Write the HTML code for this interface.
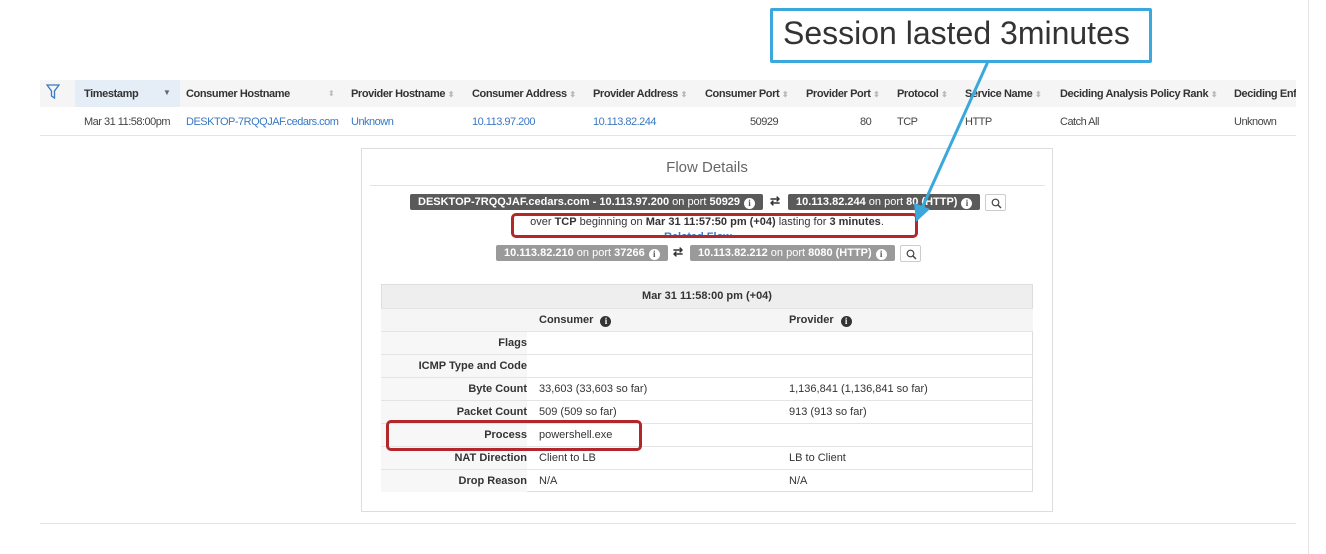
<!DOCTYPE html>
<html><head><meta charset="utf-8"><style>
*{margin:0;padding:0;box-sizing:border-box}
body{width:1326px;height:554px;background:#fff;font-family:"Liberation Sans",Arial,sans-serif;position:relative;overflow:hidden;color:#333}
.a{position:absolute;white-space:nowrap}
.h{font-size:11px;font-weight:bold;color:#333;top:88px;letter-spacing:-0.4px}
.d{font-size:11px;color:#444;top:116px;letter-spacing:-0.5px}
.l{color:#3a78c2}
.s{color:#bbb;font-size:8px}
.b{position:absolute;height:16px;color:#fff;font-size:11px;line-height:16px;padding:0 8px;border-radius:2px;white-space:nowrap}
.b b{font-weight:bold}
.i{display:inline-block;width:11px;height:11px;border-radius:50%;background:#fff;color:#555;font-size:9px;line-height:11px;text-align:center;font-weight:bold;font-family:"Liberation Serif",serif;vertical-align:-1px;margin-left:4px}
.q{position:absolute;width:21px;height:17px;border:1px solid #ccc;border-radius:2px;background:#fff}
.q svg{position:absolute;left:5px;top:3px}
.row{position:absolute;left:381px;width:652px;height:23px;border-top:1px solid #e4e4e4;font-size:11px;line-height:22px}
.row .k{position:absolute;left:0;width:146px;text-align:right;font-weight:bold;background:#f7f7f7;height:22px}
.row .c{position:absolute;left:158px}
.row .p{position:absolute;left:408px}
.red{position:absolute;border:3px solid #b3272a;border-radius:5px}
</style></head><body>
<div class="a" style="left:40px;top:80px;width:1256px;height:27px;background:#f5f5f5"></div>
<div class="a" style="left:75px;top:80px;width:105px;height:27px;background:#e5edf6"></div>
<div class="a" style="left:40px;top:135px;width:1256px;height:1px;background:#e4e4e4"></div>
<div class="a" style="left:1308px;top:0;width:1px;height:554px;background:#e4e4e4"></div>
<div class="a" style="left:40px;top:523px;width:1256px;height:1px;background:#e4e4e4"></div>
<svg class="a" style="left:46px;top:84px" width="14" height="16" viewBox="0 0 14 16"><path d="M1 1H13L8.5 7V14L5.5 12V7Z" fill="none" stroke="#3a78c2" stroke-width="1.3"/></svg>
<div class="a h" style="left:84px">Timestamp</div><div class="a" style="left:163px;top:88px;font-size:8px;color:#666">▼</div>
<div class="a h" style="left:186px">Consumer Hostname</div><div class="a s" style="left:328px;top:89px">⬍</div>
<div class="a h" style="left:351px">Provider Hostname <span class="s">⬍</span></div>
<div class="a h" style="left:472px">Consumer Address <span class="s">⬍</span></div>
<div class="a h" style="left:593px">Provider Address <span class="s">⬍</span></div>
<div class="a h" style="left:705px">Consumer Port <span class="s">⬍</span></div>
<div class="a h" style="left:806px">Provider Port <span class="s">⬍</span></div>
<div class="a h" style="left:897px">Protocol <span class="s">⬍</span></div>
<div class="a h" style="left:965px">Service Name <span class="s">⬍</span></div>
<div class="a h" style="left:1060px">Deciding Analysis Policy Rank <span class="s">⬍</span></div>
<div class="a h" style="left:1234px;width:62px;overflow:hidden">Deciding Enforcement</div>
<div class="a d" style="left:84px">Mar 31 11:58:00pm</div>
<div class="a d l" style="left:186px">DESKTOP-7RQQJAF.cedars.com</div>
<div class="a d l" style="left:351px">Unknown</div>
<div class="a d l" style="left:472px">10.113.97.200</div>
<div class="a d l" style="left:593px">10.113.82.244</div>
<div class="a d" style="left:750px">50929</div>
<div class="a d" style="left:860px">80</div>
<div class="a d" style="left:897px">TCP</div>
<div class="a d" style="left:965px">HTTP</div>
<div class="a d" style="left:1060px">Catch All</div>
<div class="a d" style="left:1234px">Unknown</div>
<div class="a" style="left:361px;top:148px;width:692px;height:364px;border:1px solid #ddd"></div>
<div class="a" style="left:361px;top:159px;width:692px;text-align:center;font-size:15px;color:#666">Flow Details</div>
<div class="a" style="left:370px;top:185px;width:675px;height:1px;background:#e4e4e4"></div>
<div class="b" style="left:410px;top:194px;background:#5a5a5a"><b>DESKTOP-7RQQJAF.cedars.com - 10.113.97.200</b> on port <b>50929</b><span class="i">i</span></div>
<div class="a" style="left:770px;top:194px;font-size:12px;font-weight:bold;color:#333">⇄</div>
<div class="b" style="left:788px;top:194px;background:#5a5a5a"><b>10.113.82.244</b> on port <b>80 (HTTP)</b><span class="i">i</span></div>
<div class="q" style="left:985px;top:194px"><svg width="11" height="11" viewBox="0 0 11 11"><circle cx="4.5" cy="4.5" r="3.3" fill="none" stroke="#444" stroke-width="1.2"/><line x1="7" y1="7" x2="10" y2="10" stroke="#444" stroke-width="1.4"/></svg></div>
<div class="a" style="left:361px;top:216px;width:692px;text-align:center;font-size:11px;color:#333">over <b>TCP</b> beginning on <b>Mar 31 11:57:50 pm (+04)</b> lasting for <b>3 minutes</b>.</div>
<div class="a" style="left:664px;top:231px;font-size:11px;color:#3a78c2;font-weight:bold;height:7px;overflow:hidden">Related Flow</div>
<div class="b" style="left:496px;top:245px;background:#9a9a9a"><b>10.113.82.210</b> on port <b>37266</b><span class="i">i</span></div>
<div class="a" style="left:673px;top:245px;font-size:12px;font-weight:bold;color:#333">⇄</div>
<div class="b" style="left:690px;top:245px;background:#9a9a9a"><b>10.113.82.212</b> on port <b>8080 (HTTP)</b><span class="i">i</span></div>
<div class="q" style="left:900px;top:245px"><svg width="11" height="11" viewBox="0 0 11 11"><circle cx="4.5" cy="4.5" r="3.3" fill="none" stroke="#444" stroke-width="1.2"/><line x1="7" y1="7" x2="10" y2="10" stroke="#444" stroke-width="1.4"/></svg></div>
<div class="a" style="left:381px;top:284px;width:652px;height:208px;border:1px solid #ddd"></div>
<div class="a" style="left:382px;top:285px;width:650px;height:23px;background:#eee;text-align:center;font-size:11px;font-weight:bold;line-height:23px">Mar 31 11:58:00 pm (+04)</div>
<div class="row" style="top:308px;background:#f5f5f5;font-weight:bold"><span class="c">Consumer <span class="i" style="background:#333;color:#fff">i</span></span><span class="p">Provider <span class="i" style="background:#333;color:#fff">i</span></span></div>
<div class="row" style="top:331px"><span class="k">Flags</span></div>
<div class="row" style="top:354px"><span class="k">ICMP Type and Code</span></div>
<div class="row" style="top:377px"><span class="k">Byte Count</span><span class="c">33,603 (33,603 so far)</span><span class="p">1,136,841 (1,136,841 so far)</span></div>
<div class="row" style="top:400px"><span class="k">Packet Count</span><span class="c">509 (509 so far)</span><span class="p">913 (913 so far)</span></div>
<div class="row" style="top:423px"><span class="k">Process</span><span class="c">powershell.exe</span></div>
<div class="row" style="top:446px"><span class="k">NAT Direction</span><span class="c">Client to LB</span><span class="p">LB to Client</span></div>
<div class="row" style="top:469px"><span class="k">Drop Reason</span><span class="c">N/A</span><span class="p">N/A</span></div>
<div class="red" style="left:511px;top:213px;width:407px;height:25px"></div>
<div class="red" style="left:386px;top:420px;width:256px;height:31px"></div>
<svg class="a" style="left:0;top:0" width="1326" height="554"><line x1="990" y1="57" x2="922" y2="208" stroke="#3aa8dc" stroke-width="3"/><polygon points="916,222 914,203 930,209" fill="#3aa8dc"/></svg>
<div class="a" style="left:770px;top:8px;width:382px;height:55px;border:3px solid #3aa8dc;background:#fff;border-radius:2px"></div>
<div class="a" style="left:783px;top:15px;font-size:32px;color:#333">Session lasted 3minutes</div>
</body></html>
